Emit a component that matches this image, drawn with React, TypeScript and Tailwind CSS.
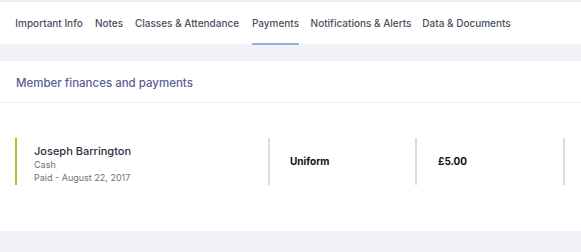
import React from "react";

const tabs = [
  { label: "Important Info", w: 66 },
  { label: "Notes", w: 26 },
  { label: "Classes & Attendance", w: 102 },
  { label: "Payments", w: 47, active: true },
  { label: "Notifications & Alerts", w: 96 },
  { label: "Data & Documents", w: 87 },
];

export default function App() {
  return (
    <div
      className="w-[581px] h-[252px] overflow-hidden bg-[#f0f1f6]"
      style={{ fontFamily: "Inter, 'Noto Sans', sans-serif" }}
    >
      <div className="h-[43px] bg-white border-t border-[#ececef] mt-px flex items-stretch pl-[16px] gap-[14px]">
        {tabs.map((t) => (
          <div
            key={t.label}
            className="relative shrink-0 flex items-center justify-center pt-[1px] text-[10px] font-medium whitespace-nowrap text-[#4b4f5e]"
            style={{ width: t.w }}
          >
            {t.label}
            {t.active && (
              <div className="absolute left-0 right-0 bottom-[-1px] h-[2px] bg-[#86b6e2]" />
            )}
          </div>
        ))}
      </div>
      <div className="h-[17px]" />
      <div className="bg-white h-[170px]">
        <div className="h-[42px] border-b border-[#eeeff3] flex items-center pl-[16px] pt-[4px]">
          <span className="text-[11.5px] font-medium text-[#5a6093]">
            Member finances and payments
          </span>
        </div>
        <div className="pt-[35px] pl-[15px] flex overflow-hidden">
          <div className="shrink-0 w-[253px] h-[47px] border-l-2 border-[#a6c43a] pl-[17px] pt-[6px] flex flex-col">
            <div className="text-[11px] font-medium text-[#2e3040] leading-[14px]">
              Joseph Barrington
            </div>
            <div className="text-[9px] text-[#6e7182] leading-[13px]">Cash</div>
            <div className="text-[9px] text-[#6e7182] leading-[13px]">
              Paid - August 22, 2017
            </div>
          </div>
          <div className="shrink-0 w-[147px] h-[47px] border-l-2 border-[#dcdcdc] pl-[20px] flex items-center">
            <span className="text-[10px] font-bold text-[#111]">Uniform</span>
          </div>
          <div className="shrink-0 w-[148px] h-[47px] border-l-2 border-[#dcdcdc] pl-[21px] flex items-center">
            <span className="text-[10px] font-bold text-[#111]">£5.00</span>
          </div>
          <div className="shrink-0 w-[100px] h-[47px] border-l-2 border-[#dcdcdc]" />
        </div>
      </div>
    </div>
  );
}
